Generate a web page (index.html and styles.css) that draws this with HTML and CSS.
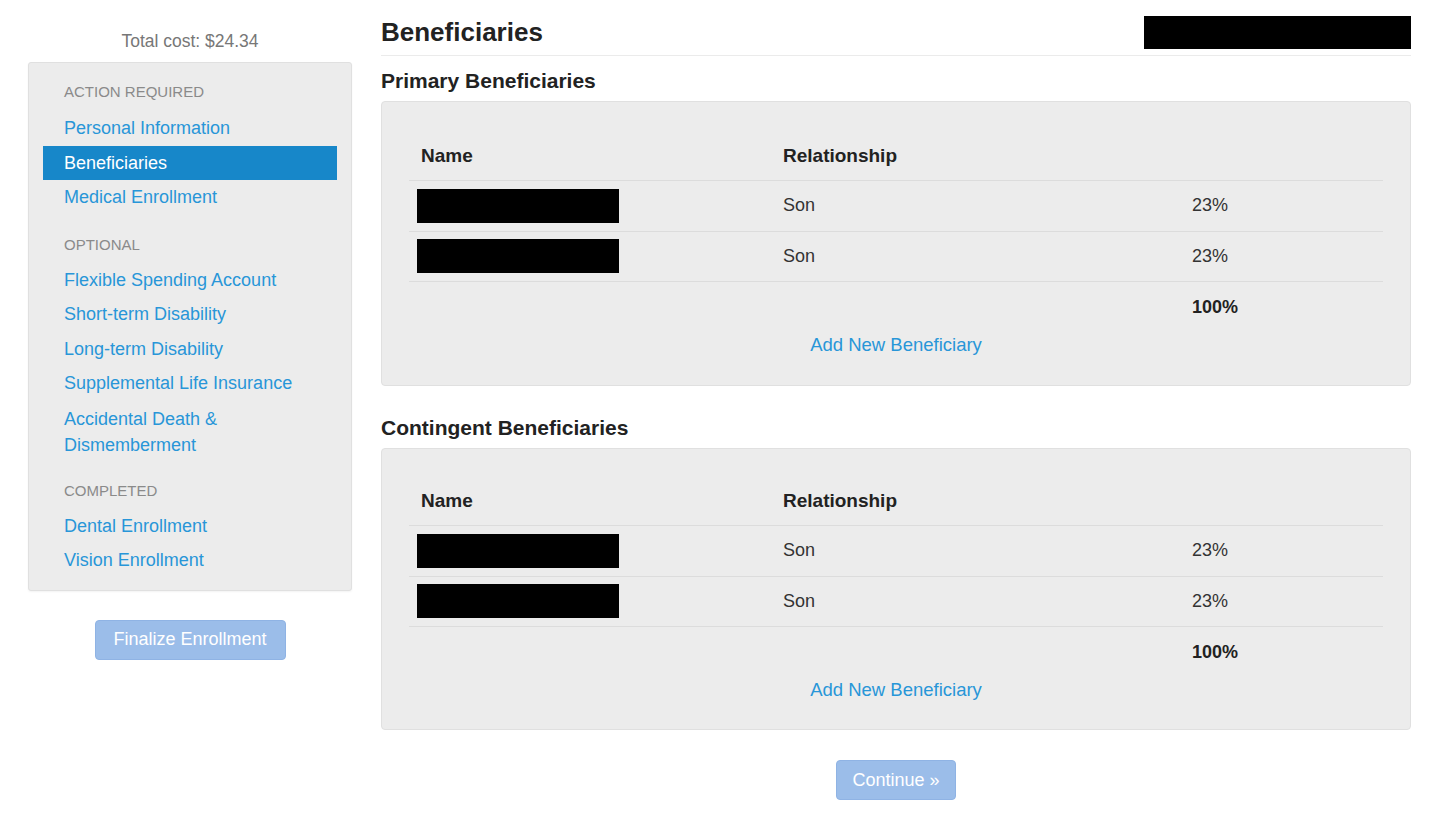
FILE: index.html
```html
<!DOCTYPE html>
<html lang="en">
<head>
<meta charset="utf-8">
<title>Beneficiaries</title>
<link rel="stylesheet" href="styles.css">
</head>
<body>
<div class="page">
  <aside class="sidebar">
    <div class="total">Total cost: $24.34</div>
    <nav class="steps">
      <div class="group-label">ACTION REQUIRED</div>
      <a class="step" href="#">Personal Information</a>
      <a class="step active" href="#">Beneficiaries</a>
      <a class="step" href="#">Medical Enrollment</a>
      <div class="group-label spaced">OPTIONAL</div>
      <a class="step" href="#">Flexible Spending Account</a>
      <a class="step" href="#">Short-term Disability</a>
      <a class="step" href="#">Long-term Disability</a>
      <a class="step" href="#">Supplemental Life Insurance</a>
      <a class="step wrap" href="#">Accidental Death &amp; Dismemberment</a>
      <div class="group-label spaced-sm">COMPLETED</div>
      <a class="step" href="#">Dental Enrollment</a>
      <a class="step" href="#">Vision Enrollment</a>
    </nav>
    <div class="btn-row">
      <button class="btn btn-finalize" type="button">Finalize Enrollment</button>
    </div>
  </aside>

  <main class="main">
    <header class="page-header">
      <h1 class="page-title">Beneficiaries</h1>
      <div class="redact-top"></div>
    </header>

    <h2 class="section-title">Primary Beneficiaries</h2>
    <section class="panel">
      <div class="ben-table">
        <div class="row head">
          <div class="cell">Name</div>
          <div class="cell">Relationship</div>
          <div class="cell"></div>
        </div>
        <div class="row data">
          <div class="cell"><span class="redact"></span></div>
          <div class="cell">Son</div>
          <div class="cell">23%</div>
        </div>
        <div class="row data">
          <div class="cell"><span class="redact"></span></div>
          <div class="cell">Son</div>
          <div class="cell">23%</div>
        </div>
        <div class="row total-row">
          <div class="cell"></div>
          <div class="cell"></div>
          <div class="cell strong">100%</div>
        </div>
      </div>
      <div class="add-row"><a class="add-link" href="#">Add New Beneficiary</a></div>
    </section>

    <h2 class="section-title second">Contingent Beneficiaries</h2>
    <section class="panel compact">
      <div class="ben-table">
        <div class="row head">
          <div class="cell">Name</div>
          <div class="cell">Relationship</div>
          <div class="cell"></div>
        </div>
        <div class="row data">
          <div class="cell"><span class="redact"></span></div>
          <div class="cell">Son</div>
          <div class="cell">23%</div>
        </div>
        <div class="row data">
          <div class="cell"><span class="redact"></span></div>
          <div class="cell">Son</div>
          <div class="cell">23%</div>
        </div>
        <div class="row total-row">
          <div class="cell"></div>
          <div class="cell"></div>
          <div class="cell strong">100%</div>
        </div>
      </div>
      <div class="add-row"><a class="add-link" href="#">Add New Beneficiary</a></div>
    </section>

    <div class="btn-row main-btn">
      <button class="btn btn-continue" type="button">Continue &raquo;</button>
    </div>
  </main>
</div>
</body>
</html>
```

FILE: styles.css
```css
* { box-sizing: border-box; }

html, body {
  margin: 0;
  padding: 0;
  background: #ffffff;
}

body {
  font-family: "Liberation Sans", Arial, Helvetica, sans-serif;
  color: #333;
}

.page {
  display: flex;
  gap: 29px;
  padding-left: 28px;
}

/* Sidebar */
.sidebar {
  width: 324px;
  flex: none;
  padding-top: 30px;
}

.total {
  text-align: center;
  font-size: 17.5px;
  line-height: 22px;
  color: #777;
  margin-bottom: 10px;
}

.steps {
  background: #ececec;
  border: 1px solid #e0e0e0;
  border-radius: 3px;
  box-shadow: 0 1px 2px rgba(0,0,0,0.05);
  padding: 19px 14px 12px;
  display: flex;
  flex-direction: column;
}

.group-label {
  font-size: 15px;
  line-height: 20px;
  color: #8a8a8a;
  padding-left: 21px;
  margin-bottom: 9px;
}

.group-label.spaced { margin-top: 20px; margin-bottom: 8px; }
.group-label.spaced-sm { margin-top: 18px; margin-bottom: 8px; }

.step {
  display: block;
  font-size: 18px;
  line-height: 24.5px;
  padding: 5px 12px 5px 21px;
  color: #2896d8;
  text-decoration: none;
}

.step.wrap { line-height: 26px; }

.step.active {
  background: #1787c9;
  color: #ffffff;
}

.btn-row {
  display: flex;
  justify-content: center;
  margin-top: 29px;
}

.btn {
  font-family: "Liberation Sans", Arial, Helvetica, sans-serif;
  font-size: 18px;
  color: #ffffff;
  background: #9bbde9;
  border: 1px solid #8fb3e4;
  border-radius: 4px;
  height: 40px;
  padding: 0 15px;
  cursor: pointer;
}

.btn-finalize { width: 191px; }
.btn-continue { width: 120px; }

/* Main */
.main {
  width: 1030px;
  flex: none;
  padding-top: 16px;
}

.page-header {
  display: flex;
  justify-content: space-between;
  align-items: center;
  padding-bottom: 6px;
  border-bottom: 1px solid #ebebeb;
}

.page-title {
  margin: 0;
  font-size: 26px;
  line-height: 33px;
  font-weight: bold;
  color: #222;
}

.redact-top {
  width: 267px;
  height: 33px;
  background: #000;
}

.section-title {
  margin: 13px 0 8px;
  font-size: 21px;
  line-height: 24px;
  font-weight: bold;
  color: #222;
}

.section-title.second { margin-top: 30px; margin-bottom: 8px; }

.panel {
  background: #ececec;
  border: 1px solid #e0e0e0;
  border-radius: 4px;
  padding: 29px 27px 26px;
}

.panel.compact { padding: 27px 27px 25px; }

.ben-table {
  display: flex;
  flex-direction: column;
}

.row {
  display: grid;
  grid-template-columns: 362px 409px 1fr;
  height: 50px;
  align-items: center;
  border-bottom: 1px solid #dcdcdc;
  font-size: 18px;
  color: #333;
}

.row.data { height: 50.5px; }

.row.head {
  font-size: 19px;
  font-weight: bold;
  color: #222;
}

.row.total-row { border-bottom: none; }

.cell {
  padding: 0 12px;
  display: flex;
  align-items: center;
}

.cell.strong { font-weight: bold; color: #222; }

.redact {
  display: block;
  width: 202px;
  height: 34px;
  background: #000;
  margin-left: -4px;
}

.add-row {
  text-align: center;
  line-height: 26px;
}

.add-link {
  font-size: 18.5px;
  color: #2896d8;
  text-decoration: none;
}

.main-btn { margin-top: 30px; }
```
